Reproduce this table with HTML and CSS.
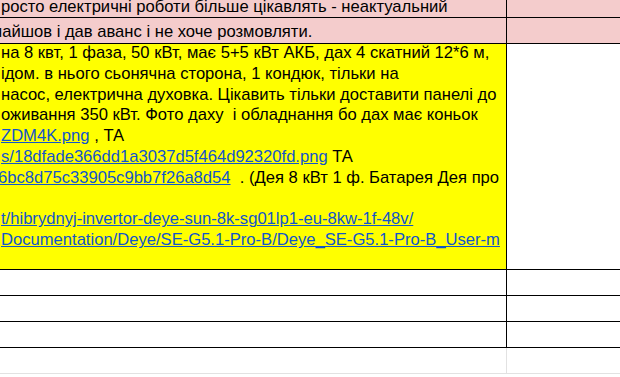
FILE: index.html
```html
<!DOCTYPE html>
<html>
<head>
<meta charset="utf-8">
<link rel="stylesheet" href="styles.css">
</head>
<body>
<div class="sheet">
  <div class="cell a pink r1"><div class="ln">росто електричні роботи більше цікавлять - неактуальний</div></div>
  <div class="cell b pink r1"></div>

  <div class="cell a pink r2"><div class="ln cut-n">найшов і дав аванс і не хоче розмовляти.</div></div>
  <div class="cell b pink r2"></div>

  <div class="cell a yellow r3">
    <div class="ln">на 8 квт, 1 фаза, 50 кВт, має 5+5 кВт АКБ, дах 4 скатний 12*6 м,</div>
    <div class="ln">ідом. в нього сьонячна сторона, 1 кондюк, тільки на</div>
    <div class="ln">насос, електрична духовка. Цікавить тільки доставити панелі до</div>
    <div class="ln">оживання 350 кВт. Фото даху  і обладнання бо дах має коньок</div>
    <div class="ln"><a class="lk">ZDM4K.png</a> , ТА</div>
    <div class="ln"><a class="lk">s/18dfade366dd1a3037d5f464d92320fd.png</a> ТА</div>
    <div class="ln cut-6"><a class="lk">6bc8d75c33905c9bb7f26a8d54</a>  . (Дея 8 кВт 1 ф. Батарея Дея про</div>
    <div class="ln"> </div>
    <div class="ln"><a class="lk">t/hibrydnyj-invertor-deye-sun-8k-sg01lp1-eu-8kw-1f-48v/</a></div>
    <div class="ln"><a class="lk">Documentation/Deye/SE-G5.1-Pro-B/Deye_SE-G5.1-Pro-B_User-m</a></div>
  </div>
  <div class="cell b r3"></div>

  <div class="cell a r4"></div>
  <div class="cell b r4"></div>
  <div class="cell a r4"></div>
  <div class="cell b r4"></div>
  <div class="cell a r4"></div>
  <div class="cell b r4"></div>
  <div class="cell a r4 light"></div>
  <div class="cell b r4 light"></div>
</div>
</body>
</html>
```
FILE: styles.css
```css
html, body {
  margin: 0;
  padding: 0;
  background: #ffffff;
  overflow: hidden;
}
body {
  width: 620px;
  height: 377px;
  font-family: "Liberation Sans", Arial, sans-serif;
  font-size: 16.6px;
  color: #000000;
}
.sheet {
  display: grid;
  grid-template-columns: 507px 1fr;
}
.cell {
  box-sizing: border-box;
  border-bottom: 1px solid #000000;
  display: flex;
  flex-direction: column;
  justify-content: flex-end;
  overflow: hidden;
  padding: 0 0 3px 1px;
  line-height: 20.8px;
}
.a {
  border-right: 1px solid #000000;
}
.pink { background: #f4cccc; }
.yellow { background: #ffff00; }
.r1 { height: 18px; padding-bottom: 0; }
.r1 .ln { margin-bottom: -1px; }
.r2 { height: 26px; padding-bottom: 0; }
.r3 { height: 226px; padding-bottom: 18px; }
.r4 { height: 26px; }
.light { border-color: #e2e2e2; }
.ln {
  white-space: pre;
}
.cut-n { margin-left: -8px; }
.cut-6 { margin-left: -3px; }
.lk {
  color: #1155cc;
  text-decoration: underline;
}
```
